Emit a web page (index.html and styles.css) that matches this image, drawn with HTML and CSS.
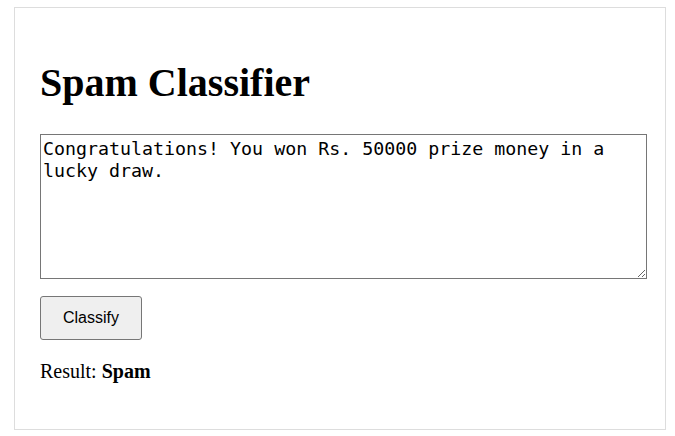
FILE: index.html
```html
<!DOCTYPE html>
<html>
<head>
<meta charset="utf-8">
<link rel="stylesheet" href="styles.css">
</head>
<body>
<div class="card">
  <h1 class="title">Spam Classifier</h1>
  <textarea class="message">Congratulations! You won Rs. 50000 prize money in a lucky draw.</textarea>
  <button class="classify">Classify</button>
  <p class="result">Result: <b>Spam</b></p>
</div>
</body>
</html>
```
FILE: styles.css
```css
html, body {
  margin: 0;
  padding: 0;
  background: #fff;
}
body {
  padding: 7px 10px 0 14px;
  font-family: "Liberation Serif", "Times New Roman", serif;
  font-size: 20px;
  color: #000;
}
.card {
  border: 1px solid #ddd;
  padding: 25px;
  width: 600px;
}
.title {
  font-size: 40px;
  font-weight: bold;
  margin: 27px 0 28px;
  line-height: 46px;
}
.message {
  display: block;
  box-sizing: border-box;
  width: 607px;
  height: 145px;
  margin: 0;
  padding: 3px 2px;
  border: 1px solid #767676;
  border-radius: 0;
  font-family: "DejaVu Sans Mono", "Liberation Mono", monospace;
  font-size: 18.3px;
  line-height: 22px;
  color: #000;
  resize: vertical;
}
.classify {
  display: block;
  box-sizing: border-box;
  margin-top: 17px;
  width: 102px;
  height: 44px;
  padding: 0;
  font-family: "Liberation Sans", Arial, sans-serif;
  font-size: 16px;
  color: #000;
  background: #efefef;
  border: 1px solid #767676;
  border-radius: 3px;
}
.result {
  margin: 20px 0 21px;
  line-height: 23px;
}
```
